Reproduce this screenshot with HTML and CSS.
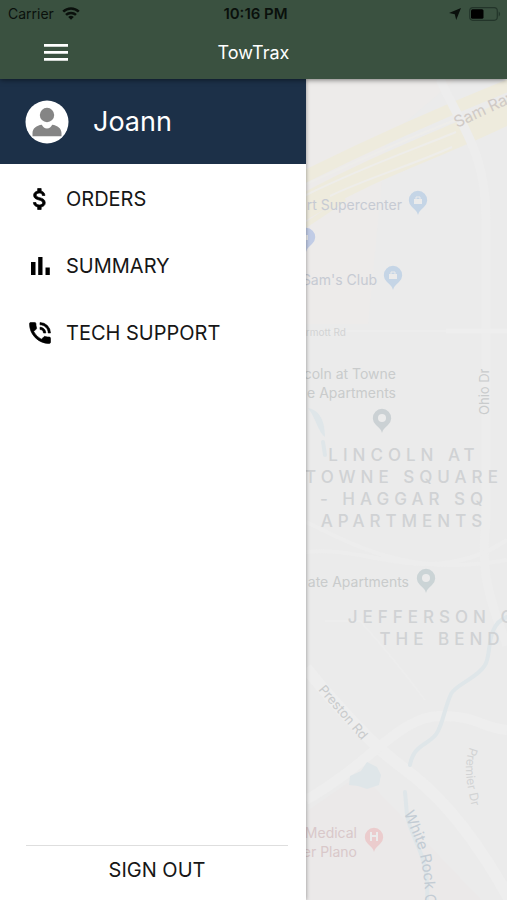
FILE: index.html
```
<!DOCTYPE html>
<html lang="en">
<head>
<meta charset="UTF-8">
<meta name="viewport" content="width=device-width, initial-scale=1">
<title>TowTrax</title>
<link rel="stylesheet" href="styles.css">
</head>
<body>
    <header class="header">
        <div class="status">
            <div class="status-left">
                <span>Carrier</span>
                <svg width="18" height="13" viewBox="0 0 18 13" fill="none" stroke="#0a100c" stroke-width="2.5">
                    <path d="M1.2 4.7a11.2 11.2 0 0 1 15.6 0"/>
                    <path d="M4 7.9a7.2 7.2 0 0 1 10 0"/>
                    <path d="M9 12.8L6.2 10a4 4 0 0 1 5.6 0z" fill="#0a100c" stroke="none"/>
                </svg>
            </div>
            <span class="time">10:16 PM</span>
            <div class="status-right">
                <svg width="12" height="12" viewBox="0 0 12 12"><path d="M12 0L7.2 12 5.8 6.3 0 5z" fill="#0a100c"/></svg>
                <svg width="32" height="14" viewBox="0 0 32 14">
                    <rect x=".7" y=".7" width="27.6" height="12.6" rx="3.2" fill="none" stroke="#23352a" stroke-width="1.2"/>
                    <rect x="2" y="2.2" width="12.5" height="9.6" rx="1.5" fill="#000"/>
                    <path d="M29.7 4.5c1.8.8 1.8 4.2 0 5z" fill="#23352a"/>
                </svg>
            </div>
        </div>
        <div class="toolbar">
            <button class="menu-button" type="button" aria-label="Menu">
                <svg width="24" height="17" viewBox="0 0 24 17" fill="#fff"><path d="M0 0h24v2.8H0zM0 7h24v2.8H0zM0 14h24v2.8H0z"/></svg>
            </button>
            <h1 class="title">TowTrax</h1>
        </div>
    </header>

    <div class="content">
        <aside class="drawer">
            <div class="profile">
                <svg width="44" height="44" viewBox="0 0 44 44">
                    <circle cx="22" cy="22" r="21.5" fill="#fff"/>
                    <circle cx="22" cy="15" r="7.2" fill="#858585"/>
                    <path d="M7.5 36.3v-3c0-5 4-7.8 9.3-8.5 1.2 2.4 2.7 3.8 5.2 3.8s4-1.4 5.2-3.8c5.3.7 9.3 3.5 9.3 8.5v3z" fill="#858585"/>
                </svg>
                <span class="name">Joann</span>
            </div>
            <nav class="menu">
                <a class="menu-item" href="#orders">
                    <svg width="28" height="28" viewBox="0 0 24 24" stroke="#000" stroke-width=".6"><path d="M11.8 10.9c-2.27-.59-3-1.2-3-2.15 0-1.09 1.01-1.85 2.7-1.85 1.78 0 2.44.85 2.5 2.1h2.21c-.07-1.72-1.12-3.3-3.21-3.81V3h-3v2.16c-1.94.42-3.5 1.68-3.5 3.61 0 2.31 1.91 3.46 4.7 4.13 2.5.6 3 1.48 3 2.41 0 .69-.49 1.79-2.7 1.79-2.06 0-2.87-.92-2.98-2.1h-2.2c.12 2.19 1.76 3.42 3.68 3.83V21h3v-2.15c1.95-.37 3.5-1.5 3.5-3.55 0-2.84-2.43-3.81-4.7-4.4z"/></svg>
                    <span>ORDERS</span>
                </a>
                <a class="menu-item" href="#summary">
                    <svg width="28" height="28" viewBox="0 0 28 28"><path d="M5 10h4.5v13H5zM12.2 5h4.3v18h-4.3zM19.5 15.5h4.3V23h-4.3z"/></svg>
                    <span>SUMMARY</span>
                </a>
                <a class="menu-item" href="#support">
                    <svg width="28" height="28" viewBox="0 0 24 24" stroke="#000" stroke-width=".5"><path d="M20 15.5c-1.25 0-2.45-.2-3.57-.57a1.02 1.02 0 0 0-1.02.24l-2.2 2.2a15.045 15.045 0 0 1-6.59-6.59l2.2-2.21a.96.96 0 0 0 .25-1A11.36 11.36 0 0 1 8.5 4c0-.55-.45-1-1-1H4c-.55 0-1 .45-1 1 0 9.39 7.61 17 17 17 .55 0 1-.45 1-1v-3.5c0-.55-.45-1-1-1zM19 12h2a9 9 0 0 0-9-9v2c3.87 0 7 3.13 7 7zm-4 0h2c0-2.76-2.24-5-5-5v2c1.66 0 3 1.34 3 3z"/></svg>
                    <span>TECH SUPPORT</span>
                </a>
            </nav>
            <button class="sign-out" type="button">SIGN OUT</button>
        </aside>

        <main class="map">
            <svg class="map-canvas" viewBox="306 79 201 821" preserveAspectRatio="xMinYMin slice">
                <defs>
                    <path id="pin" d="M0 15C-1 11-3 10-6 7a9.2 9.2 0 1 1 12 0C3 10 1 11 0 15z"/>
                    <path id="creek-line" d="M404 813C412 837 428 850 425 930"/>
                    <path id="premier-line" d="M470 747C462 767 467 785 475 822"/>
                </defs>
                <rect x="306" y="79" width="201" height="821" fill="#ebebeb"/>
                <path d="M306 79h150l-70 60-18 185h-62z" fill="#edebea"/>
                <path d="M306 812l55-38 120 126H306z" fill="#ebe9e9"/>

                <!-- highway -->
                <g fill="none" stroke="#eeebdd">
                    <path d="M300 179C370 144 430 117 512 84" stroke-width="12"/>
                    <path d="M300 202C370 163 435 140 512 104" stroke-width="13"/>
                    <path d="M300 217C370 173 430 157 512 117" stroke-width="12"/>
                    <path d="M300 229L345 199" stroke-width="5"/>
                </g>
                <g fill="none" stroke="#eeedea" stroke-width="2">
                    <path d="M300 187C360 160 410 137 458 119"/>
                    <path d="M300 198C360 168 410 151 456 132"/>
                    <path d="M330 196C370 177 410 166 452 147"/>
                </g>

                <!-- streets -->
                <g fill="none" stroke="#ededed">
                    <path d="M440 79C460 125 486 150 486 220V520C480 570 489 600 507 645" stroke-width="9"/>
                    <path d="M306 331H507" stroke-width="2"/>
                    <path d="M306 522C360 548 410 577 507 560M306 552C370 545 430 590 507 540" stroke-width="4"/>
                    <path d="M325 621H360C382 645 410 680 425 700" stroke-width="2"/>
                </g>
                <g fill="none" stroke="#eeeeee">
                    <path d="M446 331H507" stroke-width="5"/>
                    <path d="M306 668C340 710 376 748 402 767S466 820 510 900" stroke-width="12"/>
                    <path d="M306 800C370 764 400 716 440 716S480 728 507 730" stroke-width="10"/>
                </g>

                <!-- water -->
                <g fill="none" stroke="#dfe6e9" stroke-linecap="round">
                    <path d="M507 617C485 625 492 655 485 665C478 678 456 684 451 694C445 707 443 722 438 731C432 745 414 742 410 765" stroke-width="4"/>
                    <path d="M405 792L407 815C411 840 430 855 427 900" stroke-width="4"/>
                    <path d="M323 442l2 13" stroke-width="4"/>
                </g>
                <path d="M308 408c10 2 17 10 17 29-7-5-8-17-17-29zM350 776l11-5 6-9 10 5 4 8-2 10-12 4-9-3-9-1z" fill="#dfe6e9"/>

                <g>
                    <use href="#pin" x="418" y="200" fill="#c5d5e6"/>
                    <use href="#pin" x="306" y="237" fill="#c1cce6"/>
                    <use href="#pin" x="393" y="275" fill="#c5d5e6"/>
                    <use href="#pin" x="382" y="418" fill="#cbd1d4"/>
                    <use href="#pin" x="426" y="578" fill="#cbd4d6"/>
                    <use href="#pin" x="374" y="837" fill="#ebcccd"/>
                </g>
                <g fill="#ebebeb">
                    <path d="M414 199h8v5h-8zM389 274h8v5h-8zM303 235h5v5h-5z"/>
                    <circle cx="382" cy="418" r="4"/>
                    <circle cx="426" cy="578" r="4"/>
                    <path d="M370 832h2v3h4v-3h2v9h-2v-4h-4v4h-2z"/>
                </g>
                <path d="M416 199v-2h4v2M391 274v-2h4v2" fill="none" stroke="#ebebeb"/>

                <g class="place" text-anchor="end">
                    <text class="shop" x="402" y="210">rt Supercenter</text>
                    <text class="shop" x="377" y="285">Sam's Club</text>
                    <text x="396" y="379">coln at Towne</text>
                    <text x="396" y="398">e Apartments</text>
                    <text x="409" y="587">ate Apartments</text>
                    <text class="medical" x="357" y="838">Medical</text>
                    <text class="medical" x="357" y="857">er Plano</text>
                </g>
                <g class="area" text-anchor="middle">
                    <text x="404" y="461">LINCOLN AT</text>
                    <text x="404" y="483">TOWNE SQUARE</text>
                    <text x="404" y="505">- HAGGAR SQ</text>
                    <text x="404" y="527">APARTMENTS</text>
                    <text x="442" y="623">JEFFERSON ON</text>
                    <text x="442" y="645">THE BEND</text>
                </g>
                <g class="road">
                    <text class="highway" transform="translate(457 128) rotate(-25)">Sam Ray</text>
                    <text class="minor" x="346" y="336" text-anchor="end">rmott Rd</text>
                    <text transform="translate(489 415) rotate(-90)">Ohio Dr</text>
                    <text transform="translate(318 690) rotate(49)">Preston Rd</text>
                    <text class="premier"><textPath href="#premier-line">Premier Dr</textPath></text>
                    <text class="creek"><textPath href="#creek-line">White Rock Cr</textPath></text>
                </g>
            </svg>
        </main>
    </div>
</body>
</html>
```
FILE: styles.css
```
* {box-sizing: border-box;}
body {margin: 0; min-height: 100vh; display: flex; flex-direction: column; font-family: Inter, "Liberation Sans", sans-serif; color: #161616; background: #ebebeb;}
button {font: inherit; color: inherit; border: 0; padding: 0; background: none; cursor: pointer;}
svg {display: block; flex: none;}

.header {position: relative; z-index: 2; background: #3a5140; box-shadow: 0 1px 5px rgba(0, 0, 0, 0.5);}
.status {display: grid; grid-template-columns: 1fr auto 1fr; align-items: center; height: 27px; padding: 0 6px 0 8px; font-size: 14px; color: #0a100c;}
.status-left {display: flex; align-items: center; gap: 8px;}
.status-right {display: flex; align-items: center; justify-content: flex-end; gap: 8px;}
.time {padding-left: 2px; font-weight: 600; font-size: 15px;}
.toolbar {display: grid; grid-template-columns: 1fr auto 1fr; align-items: center; height: 50px; margin-bottom: 2px;}
.menu-button {justify-self: start; margin-left: 32px; padding: 12px;}
.title {margin: 0; font-size: 18px; font-weight: 400; color: #fff;}

.content {flex: 1; display: flex;}
.drawer {position: relative; z-index: 1; flex: none; width: 306px; max-width: 85%; display: flex; flex-direction: column; background: #fff; box-shadow: 0 0 4px rgba(0, 0, 0, 0.4);}
.profile {display: flex; align-items: center; gap: 24px; height: 85px; padding: 0 25px; background: #1c3048;}
.name {font-size: 27px; color: #fff;}
.menu {flex: 1; padding-top: 1px;}
.menu-item {display: flex; align-items: center; gap: 12px; height: 67px; padding: 0 26px; font-size: 20px; color: inherit; text-decoration: none;}
.sign-out {height: 55px; margin: 0 18px 0 26px; padding-bottom: 6px; border-top: 1px solid #dedede; font-size: 20px;}

.map {position: relative; flex: 1; overflow: hidden;}
.map-canvas {position: absolute; inset: 0; width: 100%; height: 100%;}
.place {font-size: 14px; fill: #c9cbcc;}
.shop {fill: #c6cad3;}
.medical {fill: #d9c8ca;}
.area {font-size: 17px; font-weight: 500; letter-spacing: 5px; fill: #d0d2d4;}
.road {font-size: 13px; fill: #c9cbcc;}
.highway {font-size: 16px; fill: #d0cac6;}
.minor {font-size: 10px; fill: #d2d3d4;}
.premier {font-size: 12px; fill: #d2d3d4;}
.creek {font-size: 15px; fill: #c3ccd4;}
```
